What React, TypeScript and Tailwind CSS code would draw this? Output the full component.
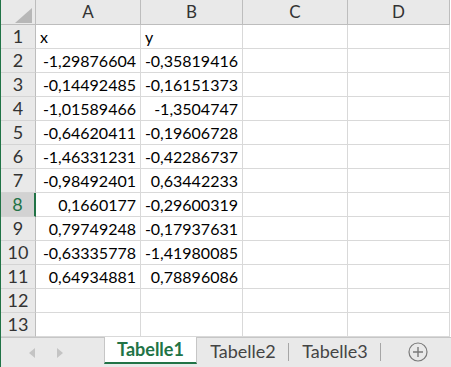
const rows: [string, string][] = [
  ["x", "y"],
  ["-1,29876604", "-0,35819416"],
  ["-0,14492485", "-0,16151373"],
  ["-1,01589466", "-1,3504747"],
  ["-0,64620411", "-0,19606728"],
  ["-1,46331231", "-0,42286737"],
  ["-0,98492401", "0,63442233"],
  ["0,1660177", "-0,29600319"],
  ["0,79749248", "-0,17937631"],
  ["-0,63335778", "-1,41980085"],
  ["0,64934881", "0,78896086"],
  ["", ""],
  ["", ""],
];

const cols = ["A", "B", "C", "D"];

function Cell({ v, first }: { v: string; first: boolean }) {
  return (
    <div
      className={
        "h-6 border-r border-b border-[#d9d9d9] flex items-center px-[4px] text-[16px] " +
        (first ? "justify-start" : "justify-end")
      }
    >
      {v}
    </div>
  );
}

export default function App() {
  return (
    <div
      className="w-[451px] h-[367px] bg-white flex flex-col border-l border-[#217346] overflow-hidden text-black"
      style={{ fontFamily: "Lato, 'Open Sans', sans-serif" }}
    >
      <div className="grid grid-cols-[35px_105px_102px_105px_102px]">
        {/* corner */}
        <div className="h-[25px] bg-[#e9e9e9] border-r border-b border-[#bdbdbd] relative">
          <svg className="absolute left-[14px] top-[8px]" width="17" height="15" viewBox="0 0 17 15">
            <polygon points="17,0 17,15 0,15" fill="#b7b7b7" />
          </svg>
        </div>
        {cols.map((c) => (
          <div
            key={c}
            className="h-[25px] bg-[#e9e9e9] border-r border-b border-[#bdbdbd] flex items-center justify-center text-[#333] text-[17px]"
          >
            {c}
          </div>
        ))}

        {rows.map((r, i) => {
          const sel = i === 7;
          return [
            <div
              key={"h" + i}
              className={
                "h-6 border-b border-[#d4d4d4] flex items-center justify-center text-[18px] " +
                (sel
                  ? "bg-[#d2d2d2] text-[#217346] border-r-2 border-r-[#217346]"
                  : "bg-[#e9e9e9] text-[#333] border-r border-r-[#bdbdbd]")
              }
            >
              {i + 1}
            </div>,
            <Cell key={"a" + i} v={r[0]} first={i === 0} />,
            <Cell key={"b" + i} v={r[1]} first={i === 0} />,
            <Cell key={"c" + i} v="" first={false} />,
            <Cell key={"d" + i} v="" first={false} />,
          ];
        })}
      </div>

      {/* sheet tabs */}
      <div className="flex-1 bg-[#e9e9e9] border-t border-[#c6c6c6] flex items-start text-[18px]">
        <div className="w-[103px] flex items-center gap-[22px] pl-[28px] pt-[10px]">
          <svg width="6" height="10" viewBox="0 0 6 10">
            <polygon points="6,0 6,10 0,5" fill="#c4c4c4" />
          </svg>
          <svg width="6" height="10" viewBox="0 0 6 10">
            <polygon points="0,0 0,10 6,5" fill="#c4c4c4" />
          </svg>
        </div>
        <div className="w-[93px] h-[27px] -mt-px bg-white border-x border-[#c6c6c6] border-b-2 border-b-[#217346] flex items-center justify-center font-bold text-[#217346]">
          Tabelle1
        </div>
        <div className="w-[92px] h-[26px] flex items-center justify-center text-[#444] relative">
          Tabelle2
          <span className="absolute right-0 top-[5px] h-[18px] w-px bg-[#a6a6a6]" />
        </div>
        <div className="w-[92px] h-[26px] flex items-center justify-center text-[#444] relative">
          Tabelle3
          <span className="absolute right-0 top-[5px] h-[18px] w-px bg-[#a6a6a6]" />
        </div>
        <div className="flex-1 flex justify-center pt-[4px] pl-[4px]">
          <svg width="20" height="20" viewBox="0 0 20 20">
            <circle cx="10" cy="10" r="9" fill="none" stroke="#7a7a7a" strokeWidth="1.2" />
            <path d="M10 5v10M5 10h10" stroke="#7a7a7a" strokeWidth="1.4" />
          </svg>
        </div>
      </div>
    </div>
  );
}
